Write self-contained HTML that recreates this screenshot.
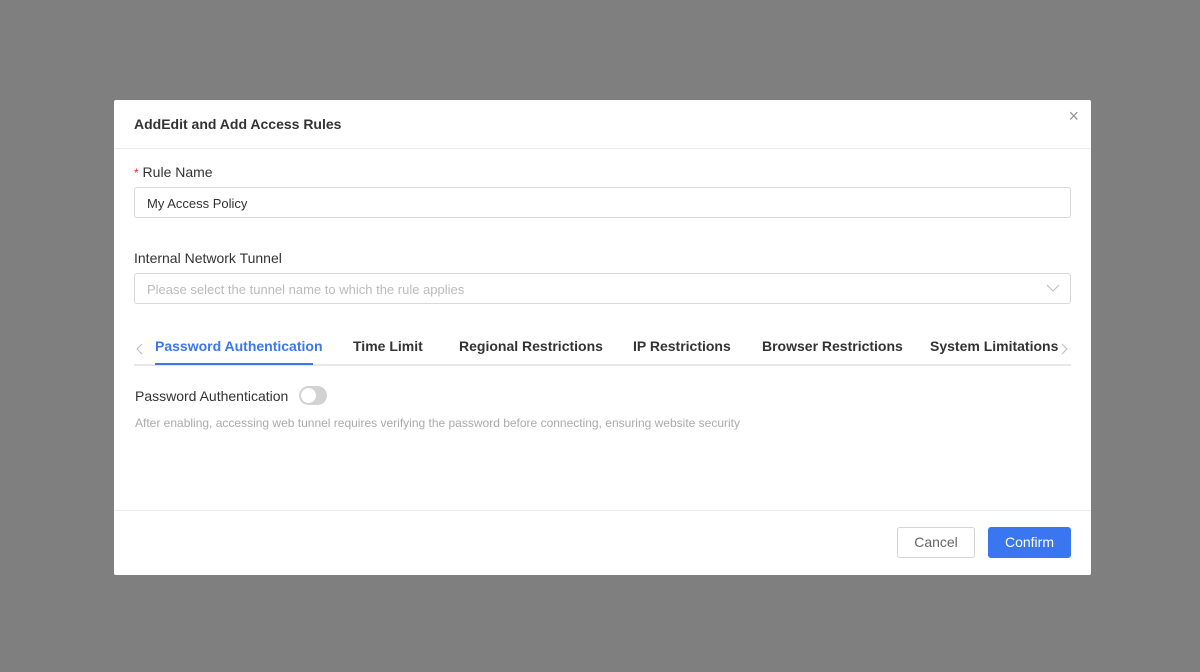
<!DOCTYPE html>
<html><head><meta charset="utf-8"><style>
*{margin:0;padding:0;box-sizing:border-box}
body{width:1200px;height:672px;background:#7f7f7f;font-family:"Liberation Sans",Arial,sans-serif;position:relative;overflow:hidden}
.m{position:absolute;left:114px;top:100px;width:977px;height:475px;background:#fff;border-radius:2px}
.a{position:absolute;white-space:nowrap}
.t{font-size:14px;color:#333;font-weight:bold;left:20px;top:16px}
.hl{position:absolute;left:0;right:0;height:1px;background:#ebebeb}
.lbl{font-size:14px;color:#333}
.in{position:absolute;left:20px;width:937px;height:31px;border:1px solid #d9d9d9;border-radius:3px;font-size:13px;padding:8px 12px}
.tab{font-size:14px;font-weight:bold;color:#333;top:238px}
.btn{position:absolute;top:427px;height:31px;border-radius:3px;font-size:14px;text-align:center;line-height:29px}
</style></head><body>
<div class="m">
<div class="a t">AddEdit and Add Access Rules</div>
<div class="a" style="right:12px;top:6px;font-size:18px;color:#999">×</div>
<div class="hl" style="top:48px"></div>
<div class="a lbl" style="left:20px;top:64px"><span style="color:#f5222d;font-size:12px">*</span> Rule Name</div>
<div class="in" style="top:87px;color:#333">My Access Policy</div>
<div class="a lbl" style="left:20px;top:150px">Internal Network Tunnel</div>
<div class="in" style="top:173px;color:#bbb">Please select the tunnel name to which the rule applies</div>
<svg class="a" style="left:932px;top:183px" width="14" height="10"><path d="M1 2l6 6 6-6" stroke="#bbb" fill="none"/></svg>
<svg class="a" style="left:22px;top:243px" width="8" height="12"><path d="M6 1L1 6l5 5" stroke="#bbb" fill="none"/></svg>
<svg class="a" style="left:946px;top:243px" width="8" height="12"><path d="M2 1l5 5-5 5" stroke="#bbb" fill="none"/></svg>
<div class="a tab" style="left:41px;color:#3a76f0">Password Authentication</div>
<div class="a tab" style="left:239px">Time Limit</div>
<div class="a tab" style="left:345px">Regional Restrictions</div>
<div class="a tab" style="left:519px">IP Restrictions</div>
<div class="a tab" style="left:648px">Browser Restrictions</div>
<div class="a tab" style="left:816px">System Limitations</div>
<div class="a" style="left:20px;top:264px;width:937px;height:2px;background:#e8e8e8"></div>
<div class="a" style="left:41px;top:263px;width:158px;height:2px;background:#3a76f0"></div>
<div class="a lbl" style="left:21px;top:288px">Password Authentication</div>
<div class="a" style="left:185px;top:286px;width:28px;height:19px;border-radius:10px;background:#d2d2d2"><div style="position:absolute;left:2px;top:2px;width:15px;height:15px;border-radius:50%;background:#fff"></div></div>
<div class="a" style="left:21px;top:316px;font-size:12px;color:#aaa">After enabling, accessing web tunnel requires verifying the password before connecting, ensuring website security</div>
<div class="hl" style="top:410px"></div>
<div class="btn" style="left:783px;width:78px;border:1px solid #d4d4d4;color:#666">Cancel</div>
<div class="btn" style="left:874px;width:83px;background:#3a76f0;color:#fff;line-height:31px">Confirm</div>
</div>
</body></html>
